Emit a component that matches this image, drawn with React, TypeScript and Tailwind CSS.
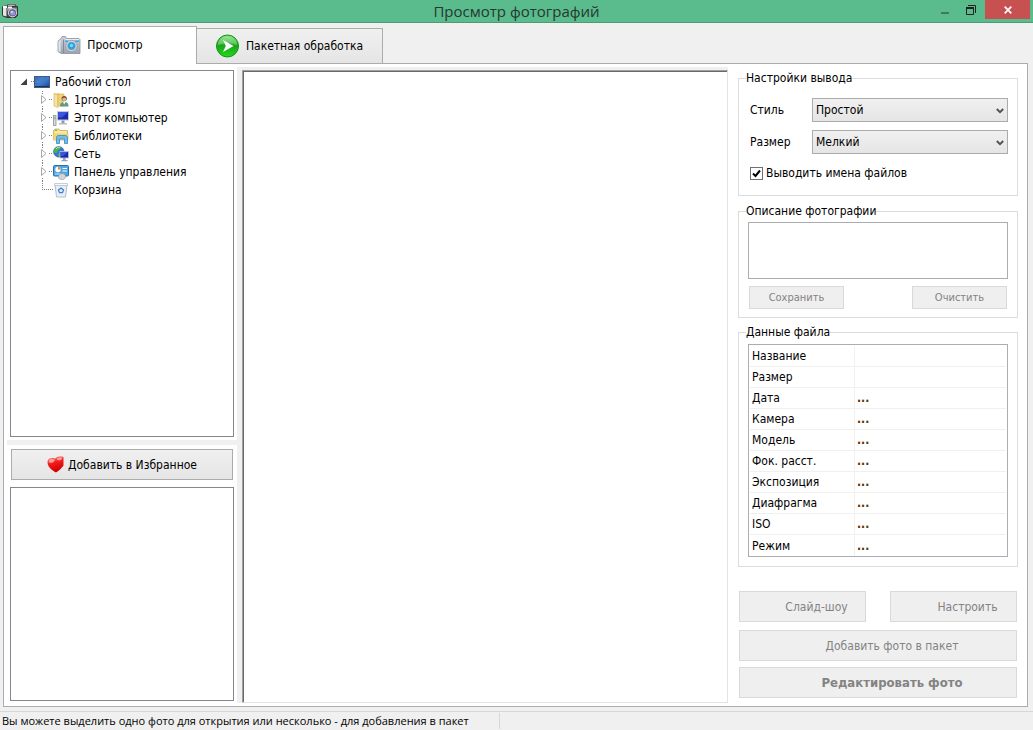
import { useState, type ReactNode } from "react";
import { clsx } from "clsx";

type TreeNode = { label: string; icon: ReactNode; expandable: boolean };

const FILE_INFO = [
  { label: "Название", value: "" },
  { label: "Размер", value: "" },
  { label: "Дата", value: "..." },
  { label: "Камера", value: "..." },
  { label: "Модель", value: "..." },
  { label: "Фок. расст.", value: "..." },
  { label: "Экспозиция", value: "..." },
  { label: "Диафрагма", value: "..." },
  { label: "ISO", value: "..." },
  { label: "Режим", value: "..." },
];

function AppIcon() {
  return (
    <svg width="16" height="16" viewBox="0 0 16 16" aria-hidden="true">
      <path d="M1 3 5 2.500 6 1h7l1.500 2 1.500.5v9L13.500 15H5L1 13.500 0 12V4z" fill="#333" />
      <path d="M6.500 1.500h6l1 1.500H5.500z" fill="#b4b4b4" />
      <path d="M1 4.500 4.500 4v9.500L1 12.500z" fill="#e4e4e4" />
      <path d="M5 4.500h10V8H5z" fill="#8a8a8a" />
      <rect x="1" y="3" width="4" height="2" fill="#fff" />
      <rect x="6" y="3.500" width="4" height="2" fill="#f2f2f2" />
      <path d="M5 8h3v5.500H5z" fill="#4a4a4a" />
      <circle cx="10.500" cy="9.800" r="4.600" fill="#cfcfd8" />
      <circle cx="10.500" cy="9.800" r="3.500" fill="#55527f" />
      <circle cx="10.700" cy="10" r="2.600" fill="#9a95dd" />
      <circle cx="9.700" cy="8.900" r="1.100" fill="#dedbff" />
    </svg>
  );
}

function CameraIcon() {
  return (
    <svg width="24" height="20" viewBox="0 0 24 20" aria-hidden="true">
      <defs>
        <linearGradient id="cam-body" x1="0" y1="0" x2="0" y2="1">
          <stop offset="0" stopColor="#ccd2d9" />
          <stop offset="1" stopColor="#9aa3ae" />
        </linearGradient>
      </defs>
      <path d="M4 3.500 5 1.500h3.500l1 2h12.500L23 4.500v14H4L1 16.500V6z" fill="url(#cam-body)" stroke="#8a929c" strokeWidth=".8" />
      <path d="M3.500 4.500 1.500 6.500v9.500l2 1.500z" fill="#e3e6ea" />
      <path d="M6.500 4.500v13.500" stroke="#828b97" />
      <path d="M8.500 4.500h13.500" stroke="#e9edf0" />
      <rect x="8" y="5.500" width="3" height="1.500" fill="#31a8ff" />
      <rect x="18" y="5.500" width="4" height="1.500" fill="#31a8ff" />
      <circle cx="14.500" cy="11" r="5.700" fill="#d6dce2" stroke="#8f98a2" strokeWidth=".8" />
      <circle cx="14.500" cy="11" r="4.200" fill="#8b99a8" />
      <circle cx="14.500" cy="11" r="3.300" fill="#19a5f2" />
      <circle cx="14.500" cy="10.500" r="1.700" fill="#76d7ff" />
    </svg>
  );
}

function GoIcon() {
  return (
    <svg width="23" height="24" viewBox="0 0 23 24" aria-hidden="true">
      <defs>
        <linearGradient id="go-ball" x1="0" y1="0" x2="0" y2="1">
          <stop offset="0" stopColor="#7fe07a" />
          <stop offset=".5" stopColor="#1aa51a" />
          <stop offset="1" stopColor="#21dc1c" />
        </linearGradient>
      </defs>
      <circle cx="11.500" cy="12" r="11" fill="url(#go-ball)" stroke="#149414" />
      <path d="M2 11a9.500 9 0 0 1 19 0c-5-2.500-13-2.500-19 0z" fill="#fff" opacity=".25" />
      <path d="M7 6 17.500 12 7 18 9.800 12z" fill="#fff" />
    </svg>
  );
}

function HeartIcon() {
  return (
    <svg width="17" height="17" viewBox="0 0 17 17" aria-hidden="true">
      <defs>
        <linearGradient id="heart-fill" x1="0" y1="0" x2="0.300" y2="1">
          <stop offset="0" stopColor="#ff9a9a" />
          <stop offset=".45" stopColor="#f51d1d" />
          <stop offset="1" stopColor="#cc0000" />
        </linearGradient>
      </defs>
      <path d="M9 16.500C5.500 14.500.5 11.500.5 6 .5 2.500 4 1.300 8.300 2.500 10 .5 13.500 0 16.500 1v8.500c-1.500 2.500-4.500 5-7.500 7z" fill="url(#heart-fill)" />
      <path d="M1.800 5.500c.5-2.500 3.200-3 6-1.800C7.500 6.500 3.500 8.500 1.800 5.500zM9.500 3C11 1.800 13 1.300 15.300 1.800 15 4.500 11.500 5.500 9.500 3z" fill="#fff" opacity=".5" />
    </svg>
  );
}

function DesktopIcon() {
  return (
    <svg width="16" height="16" viewBox="0 0 16 16" aria-hidden="true">
      <defs>
        <linearGradient id="desk" x1="0" y1="0" x2="1" y2="1">
          <stop offset="0" stopColor="#1d4c9c" />
          <stop offset=".5" stopColor="#3f7fd0" />
          <stop offset="1" stopColor="#1c458d" />
        </linearGradient>
      </defs>
      <rect x=".5" y="2.500" width="15" height="11" fill="url(#desk)" stroke="#3a5a90" />
      <path d="M1 12.500h14" stroke="#23324c" />
      <path d="M1 3h10L5 9H1z" fill="#fff" opacity=".12" />
    </svg>
  );
}

function UserFolderIcon() {
  return (
    <svg width="16" height="16" viewBox="0 0 16 16" aria-hidden="true">
      <path d="M1 1.500h6V14H1z" fill="#e3c066" />
      <path d="M1 1.500 5 3v12.500L1 14z" fill="#f7e3a0" stroke="#d3ac4c" strokeWidth=".6" />
      <path d="M5 2h6v12H5z" fill="#f0d27c" stroke="#d3ac4c" strokeWidth=".6" />
      <circle cx="11.200" cy="6.500" r="2.600" fill="#6b4a2b" />
      <circle cx="11.200" cy="7.300" r="1.900" fill="#e5b38b" />
      <path d="M7 14.500c0-3.500 1.500-4.500 4.200-4.500s4.300 1 4.300 4.500z" fill="#5f9c83" />
      <path d="m10 10 1.200 2.500L12.500 10z" fill="#fff" />
    </svg>
  );
}

function ComputerIcon() {
  return (
    <svg width="16" height="16" viewBox="0 0 16 16" aria-hidden="true">
      <rect x="4.500" y="1.500" width="11" height="8.500" fill="#1829b4" stroke="#c2c8d4" />
      <path d="M5 2h10L9 7.500H5z" fill="#4d6bf0" opacity=".65" />
      <path d="M8.500 10.500h3V13h-3z" fill="#8d97a5" />
      <path d="M6 13h8v1.500H6z" fill="#b5bdc8" />
      <rect x=".5" y="5.500" width="2.500" height="10" fill="#d5d9de" stroke="#8e959e" strokeWidth=".8" />
      <path d="M1 8h1.500" stroke="#3bb143" />
    </svg>
  );
}

function LibraryIcon() {
  return (
    <svg width="16" height="16" viewBox="0 0 16 16" aria-hidden="true">
      <path d="M.5 2.500 2 1h4l1 1.500h7.500V12H.5z" fill="#f6dc86" stroke="#d0a94b" strokeWidth=".8" />
      <path d="M2 4h11.500" stroke="#fff6d2" />
      <path d="M2 2.300h2" stroke="#4bb04b" />
      <path d="M.5 6h15v6H.5z" fill="#f3d372" />
      <path d="M3.500 15.500V9.500c0-1.200.8-2 2-2h7c1.200 0 2 .8 2 2v6h-3V11h-5v4.500z" fill="#6dbfe9" stroke="#3689bf" strokeWidth=".8" />
    </svg>
  );
}

function NetworkIcon() {
  return (
    <svg width="16" height="16" viewBox="0 0 16 16" aria-hidden="true">
      <circle cx="5.800" cy="5.800" r="5.300" fill="#3279d4" stroke="#2a5d9f" strokeWidth=".6" />
      <path d="M2 2.500C4 .5 7 .5 8 1.500 8 3.500 5 3 4.500 5.500S1.500 7 1 6s0-2.500 1-3.500zM5 7.500l3 1-1.500 2.300C5.500 10 4.500 9 5 7.500z" fill="#46b648" />
      <path d="M3 3c1-1.500 2.500-2 4-1.500" stroke="#d9f7d0" strokeWidth=".8" fill="none" />
      <rect x="7" y="5.500" width="8.500" height="6.500" fill="#1829b4" stroke="#c2c8d4" strokeWidth=".8" />
      <path d="M7.500 6h7L10.500 10h-3z" fill="#4d6bf0" opacity=".65" />
      <path d="M10 12h2.500v2H10zM8.500 14h6v1.200h-6z" fill="#98a2ae" />
    </svg>
  );
}

function ControlPanelIcon() {
  return (
    <svg width="16" height="16" viewBox="0 0 16 16" aria-hidden="true">
      <rect x=".5" y="1.500" width="15" height="10.500" rx="1" fill="#4fa8e4" stroke="#2671ac" />
      <circle cx="5" cy="5.500" r="2.700" fill="#fff" />
      <path d="M5 5.500V2.800a2.700 2.700 0 0 1 2.700 2.700z" fill="#f08b24" />
      <path d="M9.500 4.500h4.500M9.500 7h4.500" stroke="#fff" />
      <path d="M2 10h5" stroke="#bfe3fb" />
      <path d="M5.500 13c0-1.800 1.500-3.500 3.500-3.500s3.500 1 3.500 3-1.500 3-3.500 3-3.500-.7-3.500-2.500z" fill="#d2d5d9" stroke="#8e949c" strokeWidth=".6" />
    </svg>
  );
}

function RecycleBinIcon() {
  return (
    <svg width="16" height="16" viewBox="0 0 16 16" aria-hidden="true">
      <path d="M2 2.500h12L12.500 15h-9z" fill="#e9eef4" stroke="#a4aebb" strokeWidth=".8" />
      <path d="M1.500 1.500h13v2h-13z" fill="#f7f9fb" stroke="#a4aebb" strokeWidth=".6" />
      <path d="m8 6 2.500 2-1 2.700h-3l-1-2.700z" fill="none" stroke="#3b82d8" strokeWidth="1.300" />
    </svg>
  );
}

const TREE: TreeNode[] = [
  { label: "1progs.ru", icon: <UserFolderIcon />, expandable: true },
  { label: "Этот компьютер", icon: <ComputerIcon />, expandable: true },
  { label: "Библиотеки", icon: <LibraryIcon />, expandable: true },
  { label: "Сеть", icon: <NetworkIcon />, expandable: true },
  { label: "Панель управления", icon: <ControlPanelIcon />, expandable: true },
  { label: "Корзина", icon: <RecycleBinIcon />, expandable: false },
];

// Dotted connector lines and the expander arrow in front of a node
function Branch({ expandable }: { expandable: boolean }) {
  return (
    <svg width="42" height="18" viewBox="0 0 42 18" className="shrink-0" aria-hidden="true">
      {expandable ? (
        <>
          <path d="M31.500 0v4M31.500 15v3M38 8.500h4" stroke="#808080" strokeDasharray="1 1" />
          <path d="M30.500 4.500v8l4.500-4z" fill="#fff" stroke="#a6a6a6" />
        </>
      ) : (
        <path d="M31.500 0v9M31 8.500h11" stroke="#808080" strokeDasharray="1 1" fill="none" />
      )}
    </svg>
  );
}

function Group({ title, className, children }: { title: string; className?: string; children: ReactNode }) {
  return (
    <fieldset className={clsx("min-w-0 border border-[#dcdcdc]", className)}>
      <legend className="ml-[7px] h-4 leading-4">{title}</legend>
      {children}
    </fieldset>
  );
}

function SelectRow({ id, label, options }: { id: string; label: string; options: string[] }) {
  return (
    <div className="flex items-center">
      <label htmlFor={id} className="w-[62px] shrink-0">{label}</label>
      <div className="relative flex-1">
        <select
          id={id}
          className="block h-6 w-full appearance-none border border-[#acacac] bg-gradient-to-b from-[#f0f0f0] to-[#e5e5e5] pl-[3px] pr-5 text-black outline-none"
        >
          {options.map((option) => (
            <option key={option}>{option}</option>
          ))}
        </select>
        <svg width="8" height="6" viewBox="0 0 8 6" className="pointer-events-none absolute right-1 top-[10px]" aria-hidden="true">
          <path d="m.8 1 3.200 3.200L7.200 1" fill="none" stroke="#505050" strokeWidth="1.800" />
        </svg>
      </div>
    </div>
  );
}

function ActionButton({ className, children }: { className?: string; children: ReactNode }) {
  return (
    <button disabled className={clsx("h-[31px] border border-[#d9d9d9] bg-[#efefef] pl-7 text-[#838383]", className)}>
      {children}
    </button>
  );
}

export default function App() {
  const [showNames, setShowNames] = useState(true);
  const [description, setDescription] = useState("");

  return (
    <div className="flex min-h-screen flex-col bg-[#f0f0f0] font-[family-name:'DejaVu_Sans_Condensed','DejaVu_Sans',sans-serif] text-[12px] leading-4 text-black">
      {/* Title bar */}
      <header className="relative flex h-[23px] items-start justify-between border-b border-[#4a9c75] bg-[#5abb8d]">
        <div className="pl-[2px] pt-[3px]">
          <AppIcon />
        </div>
        <h1 className="absolute inset-x-0 top-0 text-center font-[family-name:'Open_Sans',sans-serif] text-[15px] leading-[23px] text-[#26382f]">
          Просмотр фотографий
        </h1>
        <div className="relative flex pr-[3px]">
          <button aria-label="Свернуть" className="flex h-[19px] w-6 items-center justify-center">
            <svg width="10" height="12" viewBox="0 0 10 12"><path d="M1 9h8" stroke="#40785e" strokeWidth="2" /></svg>
          </button>
          <button aria-label="Восстановить" className="flex h-[19px] w-7 items-center justify-center">
            <svg width="10" height="10" viewBox="0 0 10 10" fill="none" stroke="#222">
              <path d="M2 .5h7.500V8" />
              <path d="M.5 3v6.500h7V3" />
              <path d="M0 3h8" strokeWidth="2" />
            </svg>
          </button>
          <button aria-label="Закрыть" className="flex h-[19px] w-[45px] items-center justify-center bg-[#c75050]">
            <svg width="8" height="8" viewBox="0 0 8 8"><path d="m.7.7 6.600 6.600M7.300.7.7 7.300" stroke="#fff" strokeWidth="1.700" /></svg>
          </button>
        </div>
      </header>

      <main className="flex flex-1 flex-col pb-1 pl-[3px] pr-[5px] pt-[3px]">
        <div role="tablist" className="flex items-end">
          <button role="tab" aria-selected="true" className="relative z-10 -mb-px flex h-[38px] w-[194px] items-center justify-center gap-[6px] border border-b-0 border-[#acacac] bg-white pb-[2px]">
            <CameraIcon />
            Просмотр
          </button>
          <button role="tab" aria-selected="false" className="-ml-px flex h-[35px] w-[187px] items-center justify-center gap-[7px] border border-b-0 border-[#acacac] bg-gradient-to-b from-[#f0f0f0] to-[#e5e5e5]">
            <GoIcon />
            Пакетная обработка
          </button>
        </div>

        <div className="flex flex-1 border border-[#acacac] bg-white p-[3px]">
          {/* Folders and favorites */}
          <aside className="flex w-[230px] shrink-0 flex-col pb-[2px] pt-[3px]">
            <div className="mx-[3px] flex-[12] border border-[#828790] pt-[2px]">
              <div className="flex h-[18px] items-center">
                <svg width="23" height="18" viewBox="0 0 23 18" className="shrink-0" aria-hidden="true">
                  <path d="M16 5.500V12H9.500z" fill="#404040" />
                  <path d="M20 8.500h3" stroke="#808080" strokeDasharray="1 1" />
                </svg>
                <DesktopIcon />
                <span className="pl-[5px]">Рабочий стол</span>
              </div>
              <ul>
                {TREE.map((node) => (
                  <li key={node.label} className="flex h-[18px] items-center">
                    <Branch expandable={node.expandable} />
                    {node.icon}
                    <span className="pl-[5px]">{node.label}</span>
                  </li>
                ))}
              </ul>
            </div>
            <div className="mb-1 mt-[3px] h-[5px] bg-[#f0f0f0]" />
            <button className="mx-1 flex h-[31px] items-center justify-center gap-1 border border-[#acacac] bg-gradient-to-b from-[#f0f0f0] to-[#e5e5e5]">
              <HeartIcon />
              Добавить в Избранное
            </button>
            <div className="mx-[3px] mt-[7px] flex-[7] border border-[#828790]" />
          </aside>

          <div className="w-[5px] shrink-0 bg-[#f0f0f0]" />

          {/* Thumbnails */}
          <section className="flex min-w-0 flex-1 flex-col border-t-[3px] border-[#f0f0f0]">
            <div className="flex flex-1 border border-b-[#e3e3e3] border-l-[#a0a0a0] border-r-[#e3e3e3] border-t-[#a0a0a0]">
              <div className="flex-1 border-l border-t border-[#696969] bg-white" />
            </div>
          </section>

          {/* Settings column */}
          <aside className="w-[296px] shrink-0 pl-[10px] pr-[6px] pt-[3px]">
            <Group title="Настройки вывода" className="pb-[14px]">
              <div className="flex flex-col gap-2 pl-[11px] pr-[9px] pt-3">
                <SelectRow id="style" label="Стиль" options={["Простой"]} />
                <SelectRow id="size" label="Размер" options={["Мелкий"]} />
                <label className="mt-[3px] flex h-4 items-center gap-[3px]">
                  <span className="relative flex size-[13px]">
                    <input
                      type="checkbox"
                      checked={showNames}
                      onChange={(e) => setShowNames(e.target.checked)}
                      className="peer size-[13px] appearance-none border border-[#707070] bg-white"
                    />
                    <svg width="9" height="9" viewBox="0 0 9 9" className="pointer-events-none absolute left-[2px] top-[2px] hidden peer-checked:block" aria-hidden="true">
                      <path d="M1 4.500 3.500 7 8 1.500" fill="none" stroke="#000" strokeWidth="2" />
                    </svg>
                  </span>
                  Выводить имена файлов
                </label>
              </div>
            </Group>

            <Group title="Описание фотографии" className="mt-[7px] pb-2">
              <div className="px-[9px] pt-[3px]">
                <textarea
                  aria-label="Описание фотографии"
                  value={description}
                  onChange={(e) => setDescription(e.target.value)}
                  className="block h-[57px] w-full resize-none border border-[#abadb3] bg-white outline-none"
                />
                <div className="flex justify-between px-px pt-[7px] text-[11px]">
                  <button disabled className="h-[23px] w-[95px] border border-[#d9d9d9] bg-[#efefef] text-[#838383]">Сохранить</button>
                  <button disabled className="h-[23px] w-[95px] border border-[#d9d9d9] bg-[#efefef] text-[#838383]">Очистить</button>
                </div>
              </div>
            </Group>

            <Group title="Данные файла" className="mt-[6px] pb-[9px]">
              <div className="mx-[9px] mt-1 border border-[#abadb3] px-px pt-px">
                <table className="w-full border-separate border-spacing-0">
                  <tbody>
                    {FILE_INFO.map((row) => (
                      <tr key={row.label} className="group h-[21px]">
                        <th scope="row" className="w-[105px] border-b border-r border-[#f0f0f0] p-0 pl-[2px] text-left font-normal group-last:border-b-0">
                          {row.label}
                        </th>
                        <td className="border-b border-[#f0f0f0] p-0 pl-[2px] font-bold text-[#603000] group-last:border-b-0">
                          {row.value}
                        </td>
                      </tr>
                    ))}
                  </tbody>
                </table>
              </div>
            </Group>

            <div className="flex flex-col px-px pt-6">
              <div className="mb-2 flex gap-6">
                <ActionButton className="flex-1">Слайд-шоу</ActionButton>
                <ActionButton className="flex-1">Настроить</ActionButton>
              </div>
              <ActionButton className="mb-[6px]">Добавить фото в пакет</ActionButton>
              <ActionButton className="text-[13px] font-bold">Редактировать фото</ActionButton>
            </div>
          </aside>
        </div>
      </main>

      {/* Status bar */}
      <footer className="flex h-[19px] items-center border-t border-[#d7d7d7] font-[family-name:'Open_Sans',sans-serif] text-[11px]">
        <p className="h-4 w-[500px] border-r border-[#d7d7d7] pl-[2px]">
          Вы можете выделить одно фото для открытия или несколько - для добавления в пакет
        </p>
      </footer>
    </div>
  );
}
